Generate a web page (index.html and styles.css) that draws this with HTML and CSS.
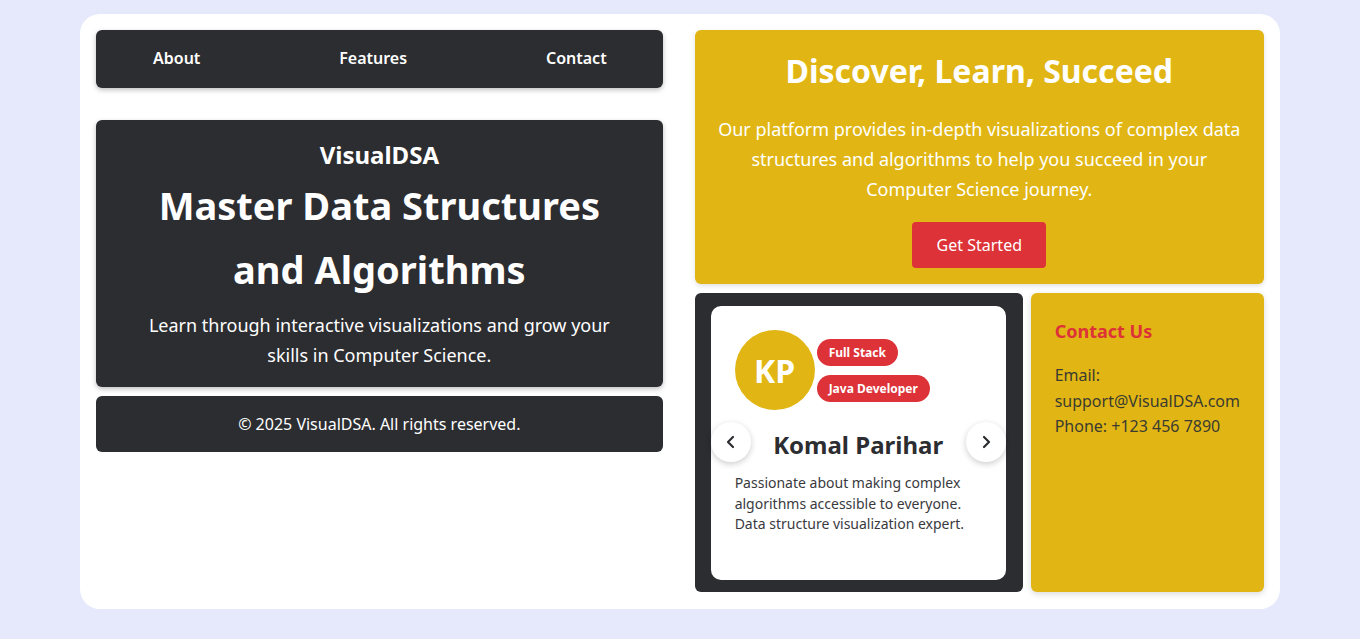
FILE: index.html
```html
<!DOCTYPE html>
<html lang="en">
<head>
<meta charset="utf-8">
<title>VisualDSA</title>
<link rel="stylesheet" href="styles.css">
</head>
<body>
<div class="page">
  <div class="col left">
    <nav class="nav">
      <a href="#">About</a>
      <a href="#">Features</a>
      <a href="#">Contact</a>
    </nav>
    <section class="hero">
      <h2 class="brand">VisualDSA</h2>
      <h1 class="hero-title">Master Data Structures and Algorithms</h1>
      <p class="hero-text">Learn through interactive visualizations and grow your skills in Computer Science.</p>
    </section>
    <footer class="footer">© 2025 VisualDSA. All rights reserved.</footer>
  </div>
  <div class="col right">
    <section class="discover">
      <h2 class="discover-title">Discover, Learn, Succeed</h2>
      <p class="discover-text">Our platform provides in-depth visualizations of complex data structures and algorithms to help you succeed in your Computer Science journey.</p>
      <button class="btn">Get Started</button>
    </section>
    <div class="bottom">
      <div class="carousel">
        <div class="profile">
          <div class="profile-top">
            <div class="avatar">KP</div>
            <div class="badges">
              <span class="badge">Full Stack</span>
              <span class="badge">Java Developer</span>
            </div>
          </div>
          <h3 class="name">Komal Parihar</h3>
          <p class="bio">Passionate about making complex algorithms accessible to everyone. Data structure visualization expert.</p>
        </div>
        <button class="arrow prev" aria-label="Previous">
          <svg width="16" height="16" viewBox="0 0 16 16"><polyline points="10,3 5,8 10,13" fill="none" stroke="#2c2d31" stroke-width="2.2" stroke-linecap="round" stroke-linejoin="round"/></svg>
        </button>
        <button class="arrow next" aria-label="Next">
          <svg width="16" height="16" viewBox="0 0 16 16"><polyline points="6,3 11,8 6,13" fill="none" stroke="#2c2d31" stroke-width="2.2" stroke-linecap="round" stroke-linejoin="round"/></svg>
        </button>
      </div>
      <div class="contact">
        <h3 class="contact-title">Contact Us</h3>
        <p class="contact-text">Email: support@VisualDSA.com<br>Phone: +123 456 7890</p>
      </div>
    </div>
  </div>
</div>
</body>
</html>
```

FILE: styles.css
```css
* { box-sizing: border-box; }
html, body { margin: 0; padding: 0; }
body {
  background: #e6e9fc;
  font-family: "Noto Sans", Lato, sans-serif;
  color: #2c2d31;
  padding-top: 14px;
}
.page {
  width: 1200px;
  margin: 0 auto;
  background: #ffffff;
  border-radius: 20px;
  padding: 16px 16px 17px;
  display: grid;
  grid-template-columns: 1fr 1fr;
  gap: 32px;
}
.col { display: flex; flex-direction: column; }
.nav {
  height: 58px;
  background: #2c2d31;
  border-radius: 6px;
  box-shadow: 0 2px 5px rgba(0,0,0,0.25);
  display: flex;
  align-items: center;
  justify-content: space-between;
  padding: 0 56px 3px 57px;
}
.nav a {
  color: #ffffff;
  text-decoration: none;
  font-weight: 600;
  font-size: 16px;
}
.hero {
  margin-top: 32px;
  height: 267px;
  background: #2c2d31;
  border-radius: 6px;
  box-shadow: 0 2px 5px rgba(0,0,0,0.25);
  color: #ffffff;
  text-align: center;
  padding: 17px 32px 0;
}
.brand { margin: 0; font-size: 24px; line-height: 36px; font-weight: 700; }
.hero-title { margin: 0; font-size: 38px; line-height: 64px; font-weight: 700; }
.hero-text { margin: 9px 0 0; font-size: 18px; line-height: 30px; }
.footer {
  margin-top: 9px;
  height: 56px;
  background: #2c2d31;
  border-radius: 6px;
  color: #ffffff;
  font-size: 16px;
  display: flex;
  align-items: center;
  justify-content: center;
}
.discover {
  height: 254px;
  background: #e1b614;
  border-radius: 6px;
  box-shadow: 0 2px 5px rgba(0,0,0,0.12);
  color: #ffffff;
  text-align: center;
  padding: 20px 16px 0;
  display: flex;
  flex-direction: column;
  align-items: center;
}
.discover-title { margin: 0; font-size: 32px; line-height: 42px; font-weight: 700; }
.discover-text { margin: 22px 0 0; font-size: 18px; line-height: 30px; }
.btn {
  margin-top: 18px;
  width: 134px;
  height: 46px;
  background: #dc3238;
  color: #ffffff;
  border: none;
  border-radius: 4px;
  font-family: inherit;
  font-size: 16px;
}
.bottom {
  margin-top: 9px;
  height: 299px;
  display: grid;
  grid-template-columns: 328px 1fr;
  gap: 8px;
}
.carousel {
  position: relative;
  background: #2c2d31;
  border-radius: 6px;
  padding: 13px 17px 12px 16px;
}
.profile {
  height: 100%;
  background: #ffffff;
  border-radius: 10px;
  padding: 24px;
}
.profile-top { display: flex; align-items: center; gap: 2px; }
.avatar {
  width: 80px; height: 80px;
  border-radius: 50%;
  background: #e1b614;
  color: #ffffff;
  font-size: 32px;
  font-weight: 700;
  display: flex; align-items: center; justify-content: center;
}
.badges { display: flex; flex-direction: column; align-items: flex-start; gap: 9px; }
.badge {
  background: #dc3238;
  color: #ffffff;
  font-size: 12px;
  font-weight: 700;
  height: 27px;
  line-height: 27px;
  padding: 0 12px;
  border-radius: 14px;
}
.name {
  margin: 18px 0 0;
  text-align: center;
  font-size: 24px;
  line-height: 34px;
  font-weight: 700;
  color: #2c2d31;
}
.bio { margin: 11px 0 0; font-size: 14px; line-height: 20.5px; color: #3a3a3e; }
.arrow {
  position: absolute;
  top: 129px;
  width: 40px; height: 40px;
  border-radius: 50%;
  border: none;
  background: #ffffff;
  box-shadow: 0 2px 6px rgba(0,0,0,0.2);
  display: flex; align-items: center; justify-content: center;
  padding: 0;
}
.arrow.prev { left: 16px; }
.arrow.next { right: 17px; }
.contact {
  background: #e1b614;
  border-radius: 6px;
  box-shadow: 0 2px 6px rgba(0,0,0,0.15);
  padding: 24px;
}
.contact-title { margin: 0; font-size: 18px; line-height: 28px; font-weight: 700; color: #dc3238; }
.contact-text { margin: 18px 0 0; font-size: 16px; line-height: 25.6px; color: #3b3b30; }
```
